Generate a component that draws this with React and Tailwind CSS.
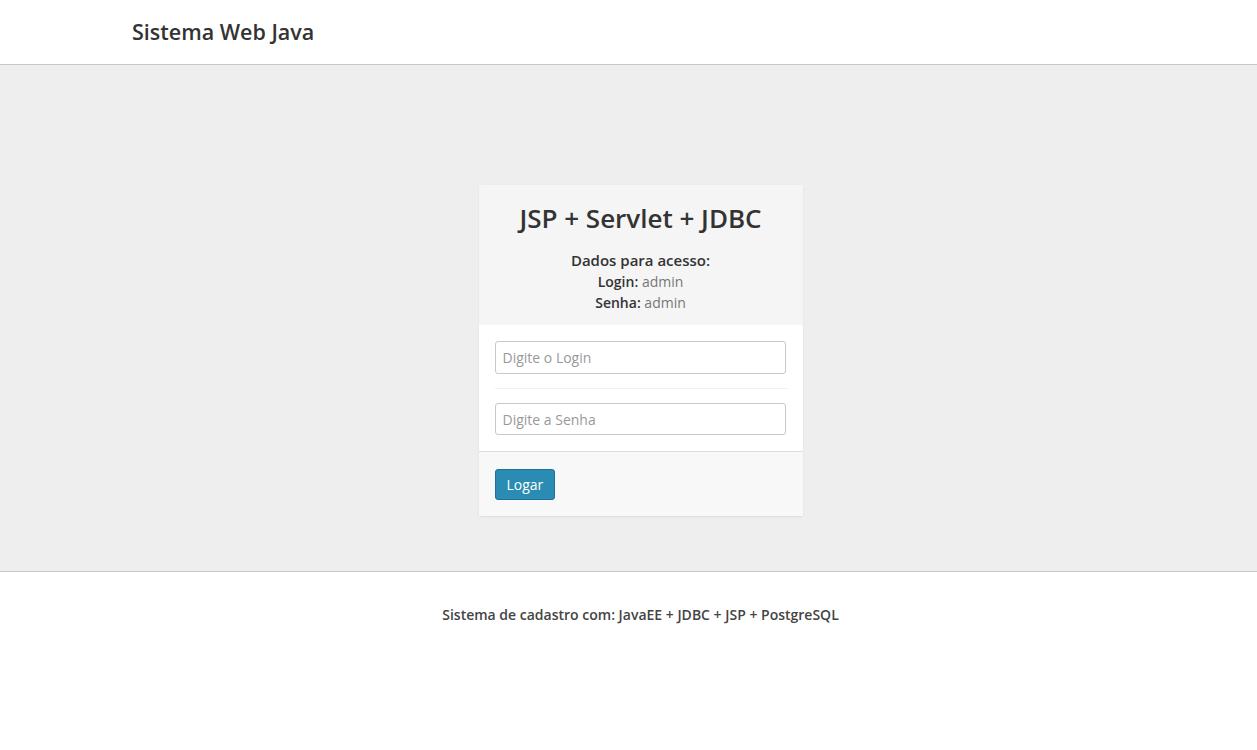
export default function App() {
  return (
    <div className="min-h-screen bg-white text-[#333]" style={{ fontFamily: '"Open Sans", "Noto Sans", sans-serif' }}>
      <header className="h-[65px] border-b border-[#c6c6c6] bg-white">
        <div className="flex h-16 items-center pl-[132px]">
          <h1 className="text-[21.5px] font-semibold text-[#333]">Sistema Web Java</h1>
        </div>
      </header>

      <main className="flex h-[507px] items-start justify-center border-b border-[#c6c6c6] bg-[#eeeeee] pl-[24px] pt-[120px]">
        <div className="w-[324px] rounded-[2px] bg-white shadow-[0_1px_2px_rgba(0,0,0,0.08)]">
          <div className="bg-[#f5f5f5] px-4 pb-[12px] pt-[16px] text-center">
            <h2 className="text-[26px] font-semibold leading-[34px] text-[#333]">JSP + Servlet + JDBC</h2>
            <div className="mt-[15px] text-[14px] leading-[21px]">
              <div className="text-[15px] font-semibold text-[#333]">Dados para acesso:</div>
              <div>
                <span className="font-semibold">Login:</span> <span className="text-[#777]">admin</span>
              </div>
              <div>
                <span className="font-semibold">Senha:</span> <span className="text-[#777]">admin</span>
              </div>
            </div>
          </div>

          <div className="px-4 pb-4 pt-4">
            <input
              placeholder="Digite o Login"
              className="block h-[33px] w-[291px] rounded-[3px] border border-[#c8c8c8] px-[7px] text-[14px] text-[#555] outline-none placeholder:text-[#999]"
            />
            <div className="my-[14px] border-t border-[#f0f0f0]" />
            <input
              type="password"
              placeholder="Digite a Senha"
              className="block h-[32px] w-[291px] rounded-[3px] border border-[#c8c8c8] px-[7px] text-[14px] text-[#555] outline-none placeholder:text-[#999]"
            />
          </div>

          <div className="border-t border-[#dddddd] bg-[#f8f8f8] px-4 pb-4 pt-[17px]">
            <button className="h-[31px] rounded-[3px] border border-[#1e7196] bg-[#2a8bb3] px-[11px] text-[14px] text-white">
              Logar
            </button>
          </div>
        </div>
      </main>

      <footer className="pl-[24px] pt-[32px] text-center">
        <p className="text-[14px] font-semibold text-[#444]">Sistema de cadastro com: JavaEE + JDBC + JSP + PostgreSQL</p>
      </footer>
    </div>
  );
}
